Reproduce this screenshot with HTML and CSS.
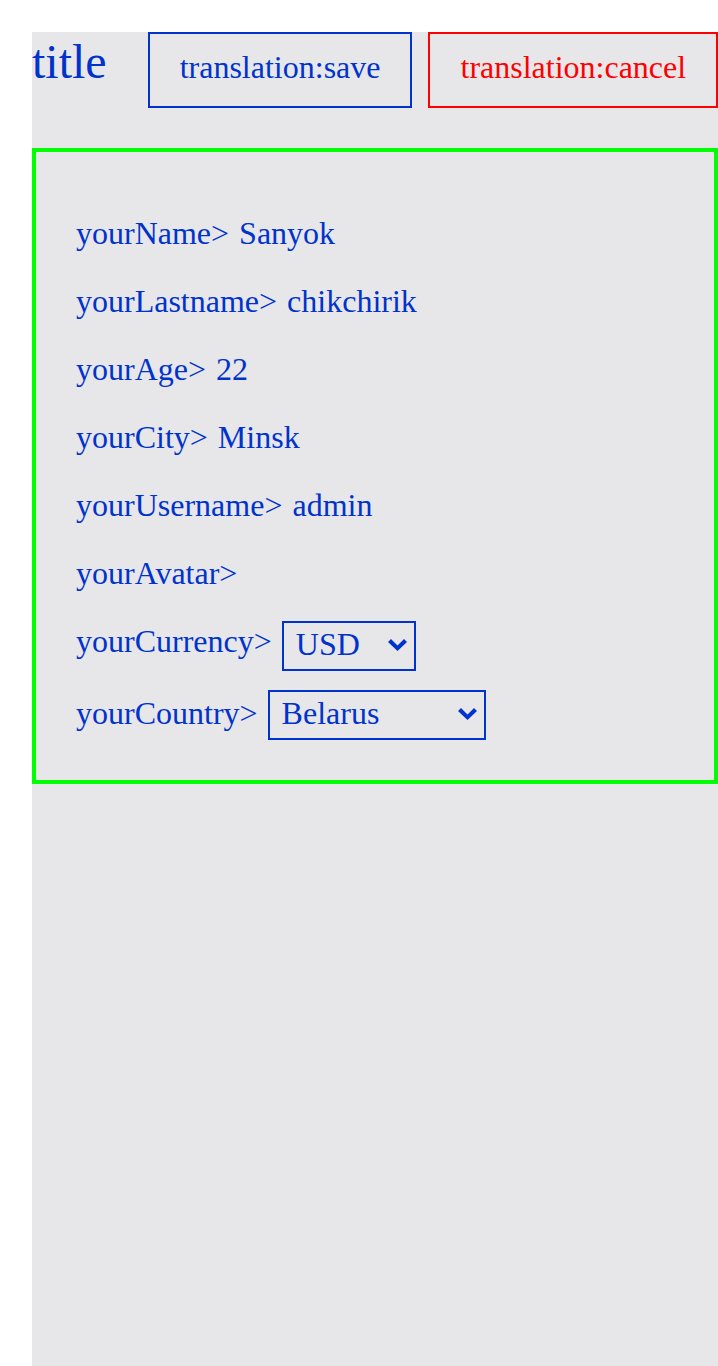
FILE: index.html
```html
<!DOCTYPE html>
<html>
<head>
<meta charset="utf-8">
<title>Profile</title>
<link rel="stylesheet" href="styles.css">
</head>
<body>
<div class="app">
  <header class="header">
    <h1 class="title">title</h1>
    <button class="btn btn-save">translation:save</button>
    <button class="btn btn-cancel">translation:cancel</button>
  </header>
  <section class="card">
    <div class="row"><span class="label">yourName&gt;</span><span class="value">Sanyok</span></div>
    <div class="row"><span class="label">yourLastname&gt;</span><span class="value">chikchirik</span></div>
    <div class="row"><span class="label">yourAge&gt;</span><span class="value">22</span></div>
    <div class="row"><span class="label">yourCity&gt;</span><span class="value">Minsk</span></div>
    <div class="row"><span class="label">yourUsername&gt;</span><span class="value">admin</span></div>
    <div class="row"><span class="label">yourAvatar&gt;</span></div>
    <div class="row row-select row-currency">
      <span class="label">yourCurrency&gt;</span>
      <span class="select-wrap">
        <select class="select select-currency">
          <option>USD</option>
          <option>EUR</option>
          <option>BYN</option>
        </select>
        <svg class="chevron" width="19" height="12" viewBox="0 0 19 12" aria-hidden="true"><polygon points="0,3 3,0 9.5,6.5 16,0 19,3 9.5,12" fill="#0033cc"/></svg>
      </span>
    </div>
    <div class="row row-select row-country">
      <span class="label">yourCountry&gt;</span>
      <span class="select-wrap">
        <select class="select select-country">
          <option>Belarus</option>
          <option>Russia</option>
          <option>Ukraine</option>
        </select>
        <svg class="chevron" width="19" height="12" viewBox="0 0 19 12" aria-hidden="true"><polygon points="0,3 3,0 9.5,6.5 16,0 19,3 9.5,12" fill="#0033cc"/></svg>
      </span>
    </div>
  </section>
</div>
</body>
</html>
```

FILE: styles.css
```css
html, body {
  margin: 0;
  padding: 0;
  background: #ffffff;
}

body {
  padding-top: 32px;
  font-family: "Liberation Serif", "Times New Roman", serif;
  color: #0033cc;
}

.app {
  margin-left: 32px;
  background: #e7e7ea;
  min-height: 1334px;
}

.header {
  display: flex;
  align-items: baseline;
  gap: 16px;
}

.title {
  margin: 0 25px 0 0;
  font-size: 48px;
  font-weight: normal;
  line-height: normal;
  color: #0033cc;
}

.btn {
  font-family: "Liberation Serif", "Times New Roman", serif;
  font-size: 32px;
  line-height: normal;
  background: transparent;
  padding: 15px 30px 20px;
  margin: 0;
  border-radius: 0;
  cursor: pointer;
}

.btn-save {
  color: #0033cc;
  border: 2px solid #0033cc;
}

.btn-cancel {
  color: #ff0000;
  border: 2px solid #ff0000;
}

.card {
  margin-top: 40px;
  border: 4px solid #00ff00;
  padding: 63px 40px 40px;
  display: flex;
  flex-direction: column;
  gap: 32px;
}

.row {
  display: flex;
  align-items: baseline;
  gap: 10px;
  font-size: 32px;
  line-height: 36px;
}

.label,
.value {
  white-space: nowrap;
}

.row-currency {
  margin-top: -2px;
}

.row-currency .label {
  align-self: flex-start;
  margin-top: 2px;
}

.row-country {
  margin-top: -13px;
}

.select-wrap {
  position: relative;
  display: inline-block;
}

.select {
  display: inline-block;
  vertical-align: baseline;
  -webkit-appearance: none;
  appearance: none;
  font-family: "Liberation Serif", "Times New Roman", serif;
  font-size: 32px;
  line-height: normal;
  color: #0033cc;
  background-color: transparent;
  border: 2px solid #0033cc;
  border-radius: 0;
  height: 50px;
  margin: 0;
  padding: 0 36px 4px 12px;
  box-sizing: border-box;
}

.select-currency {
  width: 134px;
}

.select-country {
  width: 218px;
}

.chevron {
  position: absolute;
  right: 9px;
  top: 18px;
  pointer-events: none;
}
```
